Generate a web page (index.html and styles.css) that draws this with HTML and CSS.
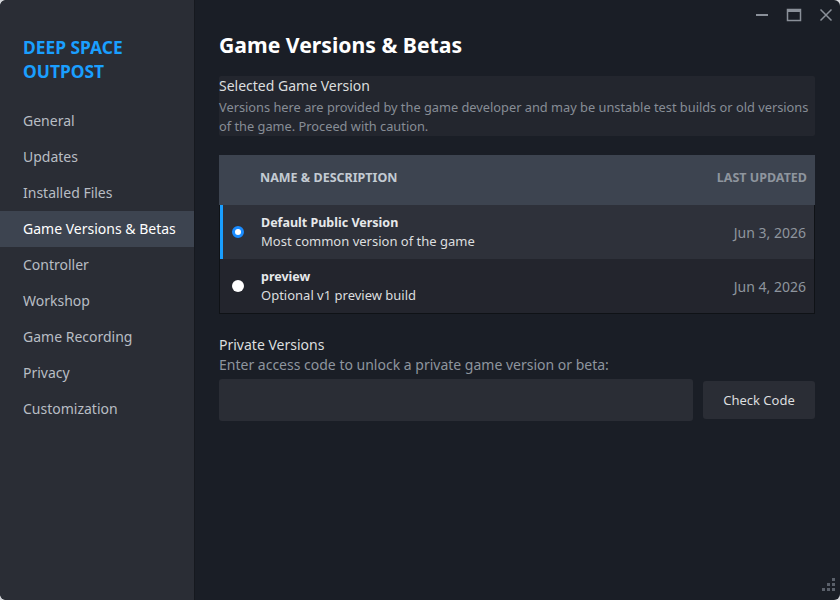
FILE: index.html
```html
<!DOCTYPE html>
<html lang="en">

<head>
  <meta charset="UTF-8">
  <title>Properties - Game Versions &amp; Betas</title>
  <link rel="stylesheet" href="styles.css">
</head>

<body>
  <div class="window">
    <aside class="sidebar">
      <div class="game-title">DEEP SPACE OUTPOST</div>
      <nav class="nav">
        <div class="nav-item">General</div>
        <div class="nav-item">Updates</div>
        <div class="nav-item">Installed Files</div>
        <div class="nav-item active">Game Versions &amp; Betas</div>
        <div class="nav-item">Controller</div>
        <div class="nav-item">Workshop</div>
        <div class="nav-item">Game Recording</div>
        <div class="nav-item">Privacy</div>
        <div class="nav-item">Customization</div>
      </nav>
    </aside>

    <main class="content">
      <div class="titlebar">
        <svg class="win-btn" width="14" height="14" viewBox="0 0 14 14">
          <line x1="1" y1="7" x2="13" y2="7" stroke="#8a9099" stroke-width="2" />
        </svg>
        <svg class="win-btn" width="16" height="14" viewBox="0 0 16 14">
          <rect x="1.5" y="1.5" width="13" height="11" fill="none" stroke="#8a9099" stroke-width="1.5" />
          <line x1="1.5" y1="3" x2="14.5" y2="3" stroke="#8a9099" stroke-width="2" />
        </svg>
        <svg class="win-btn" width="14" height="14" viewBox="0 0 14 14">
          <path d="M1.5 1.5 L12.5 12.5 M12.5 1.5 L1.5 12.5" stroke="#8a9099" stroke-width="1.5" />
        </svg>
      </div>

      <h1 class="page-title">Game Versions &amp; Betas</h1>

      <section class="notice">
        <div class="notice-title">Selected Game Version</div>
        <div class="notice-text">Versions here are provided by the game developer and may be unstable test builds or old versions of the game. Proceed with caution.</div>
      </section>

      <div class="versions">
        <div class="versions-head">
          <span>Name &amp; Description</span>
          <span class="head-date">Last Updated</span>
        </div>
        <div class="versions-body">
          <div class="version-row selected">
            <span class="radio checked"></span>
            <div class="version-info">
              <div class="version-name">Default Public Version</div>
              <div class="version-desc">Most common version of the game</div>
            </div>
            <div class="version-date">Jun 3, 2026</div>
          </div>
          <div class="version-row">
            <span class="radio"></span>
            <div class="version-info">
              <div class="version-name">preview</div>
              <div class="version-desc">Optional v1 preview build</div>
            </div>
            <div class="version-date">Jun 4, 2026</div>
          </div>
        </div>
      </div>

      <section class="private">
        <div class="private-title">Private Versions</div>
        <div class="private-text">Enter access code to unlock a private game version or beta:</div>
        <div class="code-row">
          <input class="code-input" type="text">
          <button class="check-btn">Check Code</button>
        </div>
      </section>

      <div class="grip">
        <svg width="14" height="14" viewBox="0 0 14 14">
          <rect x="10" y="1" width="3" height="3" fill="#5a606a" />
          <rect x="5" y="6" width="3" height="3" fill="#5a606a" />
          <rect x="10" y="6" width="3" height="3" fill="#5a606a" />
          <rect x="0" y="11" width="3" height="3" fill="#5a606a" />
          <rect x="5" y="11" width="3" height="3" fill="#5a606a" />
          <rect x="10" y="11" width="3" height="3" fill="#5a606a" />
        </svg>
      </div>
    </main>
  </div>
</body>

</html>
```

FILE: styles.css
```css
html,
body {
  margin: 0;
  height: 100%;
  background: #d4d6da;
}

body {
  font-family: "Noto Sans", "Open Sans", sans-serif;
  color: #dcdedf;
}

.window {
  display: flex;
  width: 840px;
  height: 600px;
  border-radius: 6px;
  overflow: hidden;
  background: #1a1e26;
}

/* Left column with the game name and the sections */
.sidebar {
  width: 194px;
  flex-shrink: 0;
  background: #2a2d35;
  border-right: 1px solid #16191f;
  border-radius: 6px 0 0 6px;
}

.game-title {
  padding: 35px 50px 0 23px;
  color: #1a9fff;
  font-size: 17.4px;
  font-weight: 700;
  line-height: 24px;
}

.nav {
  margin-top: 20px;
}

.nav-item {
  height: 36px;
  line-height: 36px;
  padding-left: 23px;
  font-size: 14px;
  color: #b8bdc4;
}

.nav-item.active {
  background: #3d4450;
  color: #ffffff;
}

/* Right column */
.content {
  position: relative;
  flex: 1;
  padding: 0 25px 0 24px;
}

.titlebar {
  display: flex;
  justify-content: flex-end;
  gap: 17px;
  height: 30px;
  margin-right: -18px;
  padding-top: 8px;
  box-sizing: border-box;
}

.win-btn {
  display: block;
}

.page-title {
  margin: 1px 0 0 0;
  font-size: 21.2px;
  font-weight: 700;
  color: #ffffff;
  line-height: 28px;
}

.notice {
  margin-top: 17px;
  background: #23262e;
  border-radius: 2px;
}

.notice-title {
  font-size: 14px;
  line-height: 20px;
  color: #dcdedf;
}

.notice-text {
  margin-top: 2px;
  font-size: 12.8px;
  line-height: 19px;
  color: #878d96;
}

.versions {
  margin-top: 19px;
}

.versions-head {
  display: flex;
  justify-content: space-between;
  align-items: center;
  height: 50px;
  padding: 0 8px 6px 41px;
  box-sizing: border-box;
  background: #3d4450;
  font-size: 12.5px;
  font-weight: 700;
  text-transform: uppercase;
  color: #c3cbd3;
}

.head-date {
  color: #8e959e;
}

.versions-body {
  border: 1px solid #0f1216;
  border-top: none;
  background: #23252d;
}

.version-row {
  display: flex;
  align-items: center;
  height: 54px;
  padding: 0 8px 0 9px;
  border-left: 3px solid transparent;
}

.version-row.selected {
  background: #2e313a;
  border-left-color: #1a9fff;
}

.radio {
  width: 12px;
  height: 12px;
  border-radius: 50%;
  background: #ffffff;
  box-sizing: border-box;
  flex-shrink: 0;
}

.radio.checked {
  border: 3px solid #1a8cff;
}

.version-info {
  flex: 1;
  margin-left: 17px;
}

.version-name {
  font-size: 12.5px;
  font-weight: 700;
  line-height: 19px;
  color: #e6e8ea;
}

.version-desc {
  font-size: 13px;
  line-height: 19px;
  color: #dcdedf;
}

.version-date {
  font-size: 14px;
  color: #8e959e;
}

.private {
  margin-top: 21px;
}

.private-title {
  font-size: 14px;
  line-height: 20px;
  color: #dcdedf;
}

.private-text {
  font-size: 14px;
  line-height: 20px;
  color: #8e959e;
}

.code-row {
  display: flex;
  align-items: center;
  gap: 10px;
  margin-top: 4px;
}

.code-input {
  flex: 1;
  height: 42px;
  border: none;
  border-radius: 3px;
  background: #2a2d35;
  box-sizing: border-box;
}

.check-btn {
  width: 112px;
  height: 38px;
  border: none;
  border-radius: 3px;
  background: #2a2d35;
  color: #dcdedf;
  font-family: inherit;
  font-size: 13px;
}

.grip {
  position: absolute;
  right: 4px;
  bottom: 4px;
}
```
